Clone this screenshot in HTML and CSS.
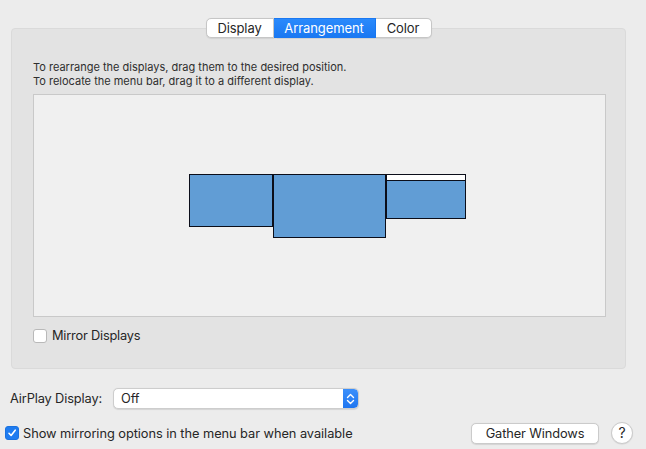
FILE: index.html
```html
<!DOCTYPE html>
<html>
<head>
<meta charset="utf-8">
<link rel="stylesheet" href="styles.css">
</head>
<body>
<div class="window">
  <div class="tabs">
    <div class="tab">Display</div>
    <div class="tab active">Arrangement</div>
    <div class="tab">Color</div>
  </div>
  <div class="panel">
    <p class="hint">To rearrange the displays, drag them to the desired position.<br>To relocate the menu bar, drag it to a different display.</p>
    <div class="canvas">
      <div class="screen s1"></div>
      <div class="screen s2"></div>
      <div class="screen s3"><div class="menubar"></div></div>
    </div>
    <label class="check-row mirror"><span class="box"></span><span>Mirror Displays</span></label>
  </div>
  <div class="airplay-row">
    <span class="label">AirPlay Display:</span>
    <div class="popup">
      <span class="value">Off</span>
      <span class="stepper">
        <svg width="9" height="12" viewBox="0 0 9 12"><path d="M1.5 4.5 L4.5 1.5 L7.5 4.5 M1.5 7.5 L4.5 10.5 L7.5 7.5" fill="none" stroke="#fff" stroke-width="1.4" stroke-linecap="round" stroke-linejoin="round"/></svg>
      </span>
    </div>
  </div>
  <div class="bottom-row">
    <label class="check-row show"><span class="box checked"><svg width="10" height="10" viewBox="0 0 10 10"><path d="M2 5.3 L4.1 7.5 L8.2 2.2" fill="none" stroke="#fff" stroke-width="1.6" stroke-linecap="round" stroke-linejoin="round"/></svg></span><span>Show mirroring options in the menu bar when available</span></label>
    <div class="btn">Gather Windows</div>
    <div class="help">?</div>
  </div>
</div>
</body>
</html>
```
FILE: styles.css
```css
* { box-sizing: border-box; }
html, body { margin: 0; padding: 0; }
body {
  background: #ececec;
  font-family: "Inter", "Liberation Sans", sans-serif;
  color: #262626;
  width: 646px;
  height: 449px;
  overflow: hidden;
}
.window { padding-top: 18px; }
.tabs {
  display: flex;
  justify-content: center;
  margin: 0 20px 0 11px;
  position: relative;
  z-index: 2;
  height: 20px;
}
.tab {
  height: 20px;
  background: #fff;
  border: 1px solid #c6c6c6;
  border-left: none;
  font-size: 13px;
  letter-spacing: -0.1px;
  line-height: 18px;
  color: #262626;
  box-shadow: 0 0.5px 1px rgba(0,0,0,0.08);
  text-align: center;
}
.tab:first-child { border-left: 1px solid #c6c6c6; border-radius: 5px 0 0 5px; width: 68px; }
.tab:last-child { border-radius: 0 5px 5px 0; width: 56px; }
.tab.active {
  background: linear-gradient(#2a8afc, #1a78f2);
  color: #fff;
  border-color: #1a78f2;
  width: 102px;
}
.panel {
  margin: -10px 20px 0 11px;
  background: #e3e3e3;
  border: 1px solid #dadada;
  border-radius: 4px;
  padding: 31px 19px 24px 21px;
  height: 341px;
}
.hint {
  margin: 0;
  font-size: 11px;
  line-height: 14px;
  color: #2e2e2e;
}
.canvas {
  position: relative;
  margin-top: 6px;
  height: 223px;
  background: #f0f0f0;
  border: 1px solid #c9c9c9;
}
.screen {
  position: absolute;
  top: 79px;
  background: #619dd5;
  border: 1px solid #0b0e1a;
}
.s1 { left: 155px; width: 84px; height: 53px; }
.s2 { left: 239px; width: 113px; height: 64px; }
.s3 { left: 352px; width: 80px; height: 45px; }
.menubar { height: 6px; background: #fff; border-bottom: 1px solid #0b0e1a; }
.check-row {
  display: flex;
  align-items: center;
  font-size: 12.8px;
  letter-spacing: -0.05px;
  color: #262626;
}
.box {
  width: 14px;
  height: 14px;
  border: 1px solid #b9b9b9;
  border-radius: 3px;
  background: #fff;
  display: flex;
  align-items: center;
  justify-content: center;
  flex: none;
}
.box.checked {
  background: #1f7cf0;
  border-color: #1a72e0;
}
.mirror { margin-top: 11px; margin-left: 0; gap: 5px; letter-spacing: -0.2px; }
.airplay-row {
  display: flex;
  align-items: center;
  margin-top: 19px;
  padding-left: 10px;
  font-size: 12.8px;
  letter-spacing: -0.12px;
}
.label { width: 103px; }
.popup {
  width: 246px;
  height: 21px;
  background: #fff;
  border: 1px solid #cdcdcd;
  border-radius: 5px;
  display: flex;
  align-items: center;
  justify-content: space-between;
  box-shadow: 0 0.5px 1px rgba(0,0,0,0.1);
  overflow: hidden;
}
.value { padding-left: 7px; }
.stepper {
  width: 15px;
  height: 19px;
  background: linear-gradient(#3b8ffb, #1f76f0);
  display: flex;
  align-items: center;
  justify-content: center;
  border-radius: 0 4px 4px 0;
}
.bottom-row {
  display: flex;
  align-items: center;
  margin-top: 13px;
  padding: 0 13px 0 5px;
  height: 22px;
}
.show { gap: 4px; flex: 1; }
.btn {
  width: 128px;
  height: 21px;
  background: #fff;
  border: 1px solid #cbcbcb;
  border-radius: 5px;
  font-size: 12.8px;
  letter-spacing: -0.1px;
  line-height: 19px;
  text-align: center;
  box-shadow: 0 0.5px 1px rgba(0,0,0,0.1);
}
.help {
  margin-left: 12px;
  width: 22px;
  height: 22px;
  border-radius: 50%;
  background: #fff;
  border: 1px solid #cbcbcb;
  font-size: 14px;
  line-height: 20px;
  text-align: center;
  box-shadow: 0 0.5px 1px rgba(0,0,0,0.1);
}
```
